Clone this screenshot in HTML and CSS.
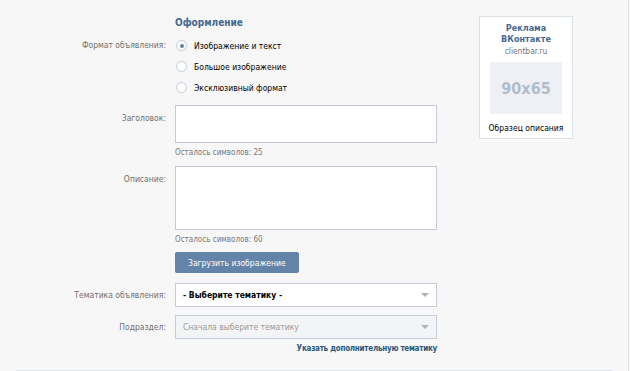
FILE: index.html
```html
<!DOCTYPE html>
<html lang="ru">
<head>
  <meta charset="UTF-8">
  <title>Оформление объявления</title>
  <link rel="stylesheet" href="styles.css">
</head>
<body>
  <div class="page">
    <div class="content">
      <div class="ad-form">
        <div class="row">
          <div class="label"></div>
          <h2 class="section-title">Оформление</h2>
        </div>

        <div class="row">
          <div class="label label-radio">Формат объявления:</div>
          <div class="radios">
            <label class="radio checked"><span class="radio-dot"></span>Изображение и текст</label>
            <label class="radio"><span class="radio-dot"></span>Большое изображение</label>
            <label class="radio"><span class="radio-dot"></span>Эксклюзивный формат</label>
          </div>
        </div>

        <div class="row row-title">
          <div class="label label-top">Заголовок:</div>
          <div class="field">
            <input type="text" class="text-input">
            <div class="hint">Осталось символов: 25</div>
          </div>
        </div>

        <div class="row row-desc">
          <div class="label label-top">Описание:</div>
          <div class="field">
            <textarea class="text-area"></textarea>
            <div class="hint">Осталось символов: 60</div>
          </div>
        </div>

        <div class="row row-upload">
          <div class="label"></div>
          <div class="field">
            <button class="button">Загрузить изображение</button>
          </div>
        </div>

        <div class="row row-select">
          <div class="label label-middle">Тематика объявления:</div>
          <div class="select">
            <span class="select-value">- Выберите тематику -</span>
            <span class="select-arrow"></span>
          </div>
        </div>

        <div class="row row-select2">
          <div class="label label-middle">Подраздел:</div>
          <div class="select disabled">
            <span class="select-value">Сначала выберите тематику</span>
            <span class="select-arrow"></span>
          </div>
        </div>

        <div class="row">
          <div class="label"></div>
          <a class="extra-link" href="#">Указать дополнительную тематику</a>
        </div>
      </div>

      <div class="preview">
        <div class="preview-title">Реклама<br>ВКонтакте</div>
        <div class="preview-domain">clientbar.ru</div>
        <div class="preview-image">90x65</div>
        <div class="preview-desc">Образец описания</div>
      </div>
    </div>
    <div class="separator"></div>
  </div>
</body>
</html>
```

FILE: styles.css
```css
:root {
  --blue: #45688e;
  --link: #2b587a;
  --border: #c3ccd6;
  --label: #707070;
}

body {
  margin: 0;
  background: #f7f7f7;
  font-family: "DejaVu Sans Condensed", "Liberation Sans", sans-serif;
  font-size: 8.5px;
  color: #000;
}

.page {
  width: 628px;
  height: 371px;
  border-right: 1px solid #dde3e9;
}

.content {
  display: flex;
  padding-top: 16px;
}

.ad-form {
  width: 437px;
}

.row {
  display: grid;
  grid-template-columns: 166px 262px;
  column-gap: 9px;
}

.label {
  text-align: right;
  color: var(--label);
  line-height: 14px;
}
.label-radio {
  line-height: 21px;
}
.label-top {
  padding-top: 6px;
}
.label-middle {
  align-self: center;
}

.section-title {
  margin: 0 0 5px;
  font-size: 10px;
  line-height: 14px;
  color: var(--blue);
}

.radios {
  display: flex;
  flex-direction: column;
}

.radio {
  display: flex;
  align-items: center;
  height: 21px;
}

.radio-dot {
  width: 9px;
  height: 9px;
  border: 1px solid var(--border);
  border-radius: 50%;
  background: #fff;
  margin: 0 7px 0 1px;
  display: flex;
  align-items: center;
  justify-content: center;
}
.radio.checked .radio-dot::after {
  content: "";
  width: 4px;
  height: 4px;
  border-radius: 50%;
  background: #5b7fa6;
}

.row-title {
  margin-top: 7px;
}

.text-input,
.text-area {
  display: block;
  box-sizing: border-box;
  width: 262px;
  margin: 0;
  border: 1px solid var(--border);
  background: #fff;
  font: inherit;
  resize: none;
}
.text-input {
  height: 38px;
}
.text-area {
  height: 64px;
}

.hint {
  margin-top: 3px;
  line-height: 14px;
  font-size: 8px;
  color: #777;
}

.row-desc {
  margin-top: 6px;
}

.row-upload {
  margin-top: 5px;
}

.button {
  height: 21px;
  padding: 0 13px;
  border: none;
  border-radius: 2px;
  background: #6383a8;
  color: #fff;
  font: inherit;
}

.row-select {
  margin-top: 10px;
}
.row-select2 {
  margin-top: 8px;
}

.select {
  box-sizing: border-box;
  height: 24px;
  border: 1px solid var(--border);
  background: #fff;
  display: flex;
  align-items: center;
  justify-content: space-between;
  padding: 0 7px;
}
.select-value {
  font-weight: bold;
}
.select.disabled {
  background: #f3f4f6;
}
.select.disabled .select-value {
  font-weight: normal;
  color: #999;
}
.select-arrow {
  width: 0;
  height: 0;
  border-left: 4px solid transparent;
  border-right: 4px solid transparent;
  border-top: 4px solid #aab2bc;
}

.extra-link {
  margin-top: 3px;
  line-height: 14px;
  text-align: right;
  color: var(--link);
  font-size: 8px;
  font-weight: bold;
  letter-spacing: -0.25px;
  text-decoration: none;
}

.preview {
  margin-left: 42px;
  box-sizing: border-box;
  width: 94px;
  height: 123px;
  border: 1px solid #dae2e8;
  background: #fff;
  text-align: center;
  padding-top: 6px;
}
.preview-title {
  font-size: 9px;
  font-weight: bold;
  color: var(--blue);
  line-height: 11px;
}
.preview-domain {
  color: #777;
  font-size: 8.4px;
  line-height: 13px;
}
.preview-image {
  width: 72px;
  height: 52px;
  margin: 4px auto 0;
  background: #edf1f5;
  color: #b0bccc;
  font-size: 16px;
  font-weight: bold;
  display: flex;
  align-items: center;
  justify-content: center;
}
.preview-desc {
  margin-top: 7px;
  line-height: 14px;
}

.separator {
  margin: 14px 16px 0;
  height: 1px;
  background: #dae1e8;
}
```
